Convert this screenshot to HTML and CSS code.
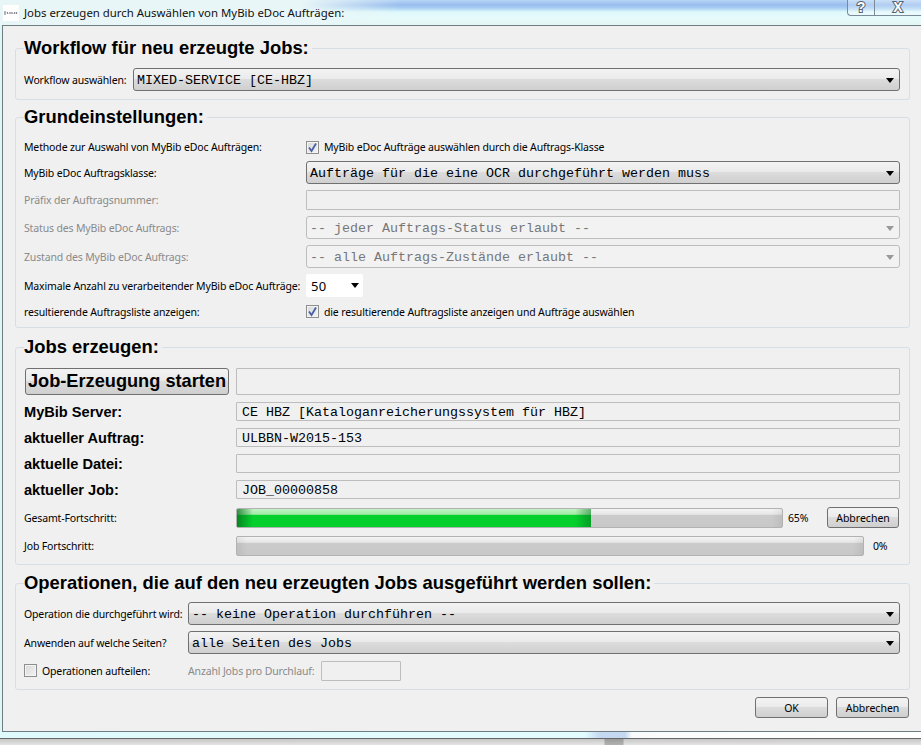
FILE: index.html
```html
<!DOCTYPE html>
<html lang="de">
<head>
<meta charset="utf-8">
<title>Jobs erzeugen</title>
<link rel="stylesheet" href="styles.css">
</head>
<body>
<div class="window">
  <header class="titlebar">
    <div class="appicon"><svg width="16" height="16" viewBox="0 0 16 16"><path d="M1 7h2M1 9h2M4 7l1 2M6 8h2M9 7v2M11 9l1-2M13 9l1-2" stroke="#667" stroke-width="1" fill="none"/></svg></div>
    <span class="wintitle">Jobs erzeugen durch Auswählen von MyBib eDoc Aufträgen:</span>
    <div class="winbtns">
      <span class="winbtn help">?</span>
      <span class="winbtn close">X</span>
    </div>
  </header>
  <main class="dialog">
    <fieldset class="group g1">
      <legend>Workflow für neu erzeugte Jobs:</legend>
      <div class="row-wf">
        <span class="lbl">Workflow auswählen:</span>
        <div class="combo"><span>MIXED-SERVICE [CE-HBZ]</span><i class="arrow"></i></div>
      </div>
    </fieldset>
    <fieldset class="group g2">
      <legend>Grundeinstellungen:</legend>
      <div class="grid-basic">
        <span class="lbl">Methode zur Auswahl von MyBib eDoc Aufträgen:</span>
        <label class="check"><i class="box on"><svg width="13" height="13" viewBox="0 0 13 13"><path d="M3 6.5l2.5 3.5L10 2.5" stroke="#4a5fa8" stroke-width="1.8" fill="none"/></svg></i>MyBib eDoc Aufträge auswählen durch die Auftrags-Klasse</label>
        <span class="lbl">MyBib eDoc Auftragsklasse:</span>
        <div class="combo"><span>Aufträge für die eine OCR durchgeführt werden muss</span><i class="arrow"></i></div>
        <span class="lbl off">Präfix der Auftragsnummer:</span>
        <div class="field off-field"></div>
        <span class="lbl off">Status des MyBib eDoc Auftrags:</span>
        <div class="combo disabled"><span>-- jeder Auftrags-Status erlaubt --</span><i class="arrow"></i></div>
        <span class="lbl off">Zustand des MyBib eDoc Auftrags:</span>
        <div class="combo disabled"><span>-- alle Auftrags-Zustände erlaubt --</span><i class="arrow"></i></div>
        <span class="lbl">Maximale Anzahl zu verarbeitender MyBib eDoc Aufträge:</span>
        <div class="spin"><span>50</span><i class="arrow"></i></div>
        <span class="lbl">resultierende Auftragsliste anzeigen:</span>
        <label class="check"><i class="box on"><svg width="13" height="13" viewBox="0 0 13 13"><path d="M3 6.5l2.5 3.5L10 2.5" stroke="#4a5fa8" stroke-width="1.8" fill="none"/></svg></i>die resultierende Auftragsliste anzeigen und Aufträge auswählen</label>
      </div>
    </fieldset>
    <fieldset class="group g3">
      <legend>Jobs erzeugen:</legend>
      <div class="grid-jobs">
        <button class="bigbtn" type="button">Job-Erzeugung starten</button>
        <div class="field tall"></div>
        <span class="blbl">MyBib Server:</span>
        <div class="field mono">CE HBZ [Kataloganreicherungssystem für HBZ]</div>
        <span class="blbl">aktueller Auftrag:</span>
        <div class="field mono">ULBBN-W2015-153</div>
        <span class="blbl">aktuelle Datei:</span>
        <div class="field mono"></div>
        <span class="blbl">aktueller Job:</span>
        <div class="field mono">JOB_00000858</div>
        <span class="lbl">Gesamt-Fortschritt:</span>
        <div class="prog-row">
          <div class="bar b1"><div class="fill" style="width:65%"></div></div>
          <span class="pct p1">65%</span>
          <button class="btn" type="button">Abbrechen</button>
        </div>
        <span class="lbl">Job Fortschritt:</span>
        <div class="prog-row">
          <div class="bar b2"></div>
          <span class="pct p2">0%</span>
        </div>
      </div>
    </fieldset>
    <fieldset class="group g4">
      <legend>Operationen, die auf den neu erzeugten Jobs ausgeführt werden sollen:</legend>
      <div class="grid-ops">
        <span class="lbl">Operation die durchgeführt wird:</span>
        <div class="combo"><span>-- keine Operation durchführen --</span><i class="arrow"></i></div>
        <span class="lbl">Anwenden auf welche Seiten?</span>
        <div class="combo"><span>alle Seiten des Jobs</span><i class="arrow"></i></div>
        <label class="check split"><i class="box"></i>Operationen aufteilen:</label>
        <div class="split-right">
          <span class="lbl off">Anzahl Jobs pro Durchlauf:</span>
          <div class="field off-field small"></div>
        </div>
      </div>
    </fieldset>
    <div class="actions">
      <button class="btn" type="button">OK</button>
      <button class="btn" type="button">Abbrechen</button>
    </div>
  </main>
  <div class="frame-bottom"></div>
  <div class="frame-shadow"></div>
</div>
</body>
</html>
```
FILE: styles.css
```css
* { box-sizing: border-box; }
html, body { margin: 0; height: 100%; overflow: hidden; background: #f2f4f4; }
body { font: 10.5px "Noto Sans", sans-serif; letter-spacing: -.15px; color: #000; }
.window { width: 921px; height: 745px; display: flex; flex-direction: column; overflow: hidden; background: #dff6f6; }

.titlebar { height: 25px; flex: none; display: flex; align-items: center; padding: 0 0 0 3px;
  background:
    linear-gradient(90deg, #e9f6f8 0, #e9f6f8 300px, rgba(233,246,248,0) 400px),
    linear-gradient(180deg, #b9d6f5 0, #98bcee 5px, #a9cff2 8px, #dff8fb 12px, #e6fbfb 18px, #e3f5f3 25px);
}
.appicon { width: 16px; height: 16px; background: #fff; display: flex; }
.wintitle { margin-left: 5px; font: 11.4px "Noto Sans", sans-serif; letter-spacing: 0; color: #111; }
.winbtns { margin-left: auto; align-self: flex-start; display: flex; height: 16px; border: 1px solid #7b8a99; border-top: 0; border-right: 0; border-radius: 0 0 0 4px; background: rgba(255,255,255,.25); }
.winbtn { width: 27px; text-align: center; font: bold 14px/14px "Liberation Sans", sans-serif; letter-spacing: 0; color: #fff; -webkit-text-stroke: 2px #56626e; paint-order: stroke fill; }
.help { border-right: 1px solid #7b8a99; }
.close { width: 46px; }

.dialog { flex: none; height: 707px; margin-left: 2px; background: #f0f0f0; border: 1px solid #6e7d80; border-right: 0; padding: 11px 0 0 12px; display: flex; flex-direction: column; gap: 6px; }
.group { width: 895px; margin: 0; padding: 0 9px 8px 8px; border: 1px solid #d8dee6; border-radius: 3px; min-width: 0; }
.group legend { margin-left: 0; padding: 0 3px 0 0; font: bold 18.4px/22px "Liberation Sans", sans-serif; letter-spacing: 0; }
.g1 > div { padding-top: 9px; }
.g2 { padding-bottom: 7px; }
.g2 > div { padding-top: 11px; }
.g3 { margin-top: 2px; }
.g4 { margin-top: 1px; }

.lbl { white-space: nowrap; }
.off { color: #8a8a8a; }
.blbl { font: bold 14.6px "Liberation Sans", sans-serif; letter-spacing: 0; }

.row-wf { display: grid; grid-template-columns: 109px 1fr; align-items: center; }

.combo { height: 23px; border: 1px solid #707070; border-radius: 3px; display: flex; align-items: center; justify-content: space-between; padding: 2px 5px 0 3px;
  background: linear-gradient(180deg, #f3f3f3 0, #ebebeb 45%, #dcdcdc 50%, #cfcfcf 100%);
  font: 13.33px "Liberation Mono", monospace; letter-spacing: 0; }
.combo.disabled { background: #f2f2f2; border-color: #bdbdbd; color: #777; border-radius: 3px; }
.arrow { width: 0; height: 0; border: 4px solid transparent; border-top: 5px solid #000; border-bottom: 0; flex: none; }
.disabled .arrow { border-top-color: #999; }

.grid-basic { display: grid; grid-template-columns: 282px 1fr; align-items: center; row-gap: 6px; grid-template-rows: 16px 23px 20px 23px 23px 23px 17px; }
.grid-jobs { display: grid; grid-template-columns: 212px 1fr; align-items: center; padding-top: 10px; row-gap: 7px; grid-template-rows: 27px 19px 19px 19px 20px 21px 21px; }
.grid-jobs .field { align-self: start; }
.grid-ops { display: grid; grid-template-columns: 164px 1fr; align-items: center; padding-top: 8px; row-gap: 6px; grid-template-rows: 23px 23px 21px; }

.check { display: flex; align-items: center; gap: 5px; white-space: nowrap; }
.box { width: 13px; height: 13px; border: 1px solid #8e8f8f; background: linear-gradient(135deg, #d8d8d8, #f4f4f4); box-shadow: inset 0 0 0 1px #f4f4f4; display: block; flex: none; }
.box svg { display: block; margin: -1px; }
.split-right { display: flex; align-items: center; gap: 7px; }

.field { height: 19px; border: 1px solid #bdbdbd; background: #f0f0f0; padding: 0 5px; display: flex; align-items: center; border-radius: 1px; }
.field.mono { font: 13.33px "Liberation Mono", monospace; letter-spacing: 0; padding-top: 1px; }
.field.tall { height: 27px; }
.field.small { width: 80px; height: 20px; }
.off-field { height: 20px; }

.spin { width: 57px; height: 23px; background: #fff; border-radius: 2px; display: flex; align-items: center; justify-content: space-between; padding: 0 4px 0 5px; font: 13px "Noto Sans", sans-serif; letter-spacing: .3px; }

.bigbtn { width: 204px; height: 27px; margin-left: 1px; padding: 0; font: bold 18.2px "Liberation Sans", sans-serif; border: 1px solid #707070; border-radius: 3px; background: linear-gradient(180deg, #f3f3f3 0, #ebebeb 45%, #dcdcdc 50%, #cfcfcf 100%); color: #000; }
.btn { width: 73px; height: 21px; padding: 0; font: 10.5px "Noto Sans", sans-serif; border: 1px solid #707070; border-radius: 3px; background: linear-gradient(180deg, #f3f3f3 0, #ebebeb 45%, #dcdcdc 50%, #cfcfcf 100%); color: #000; }

.prog-row { display: flex; align-items: center; }
.bar { height: 20px; border: 1px solid #b2b2b2; border-radius: 2px; overflow: hidden;
  background:
    linear-gradient(90deg, rgba(0,0,0,.06) 0, rgba(0,0,0,0) 10px, rgba(0,0,0,0) calc(100% - 10px), rgba(0,0,0,.06) 100%),
    linear-gradient(180deg, #f4f4f4 0, #e6e6e6 30%, #cbcbcb 33%, #c8c8c8 100%); }
.b1 { width: 547px; }
.b2 { width: 628px; }
.fill { height: 100%;
  background:
    linear-gradient(90deg, rgba(5,110,30,.75) 0, rgba(5,110,30,0) 16px, rgba(5,110,30,0) calc(100% - 16px), rgba(5,110,30,.5) 100%),
    linear-gradient(180deg, #c4f3c4 0, #a2eaa6 30%, #05d02c 33%, #05d02c 100%); }
.pct { white-space: nowrap; }
.p1 { margin-left: 5px; width: 39px; }
.p2 { margin-left: 9px; }
.prog-row .btn { width: 72px; }

.actions { display: flex; justify-content: flex-end; gap: 8px; width: 894px; margin-top: 1px; }
.frame-bottom { height: 7px; flex: none; border-bottom: 1px solid #666;
  background: linear-gradient(90deg, #dffafc 0, #e3fcff 585px, #c4d8f2 600px, #c4d8f2 625px, #fafcfc 632px, #fff 100%); }
.frame-shadow { flex: 1;
  background:
    linear-gradient(90deg, rgba(0,0,0,0) 604px, rgba(0,0,0,.22) 605px, rgba(0,0,0,.22) 623px, rgba(0,0,0,0) 624px),
    linear-gradient(180deg, #c6c6c6 0, #e4e4e4 100%); }
```
